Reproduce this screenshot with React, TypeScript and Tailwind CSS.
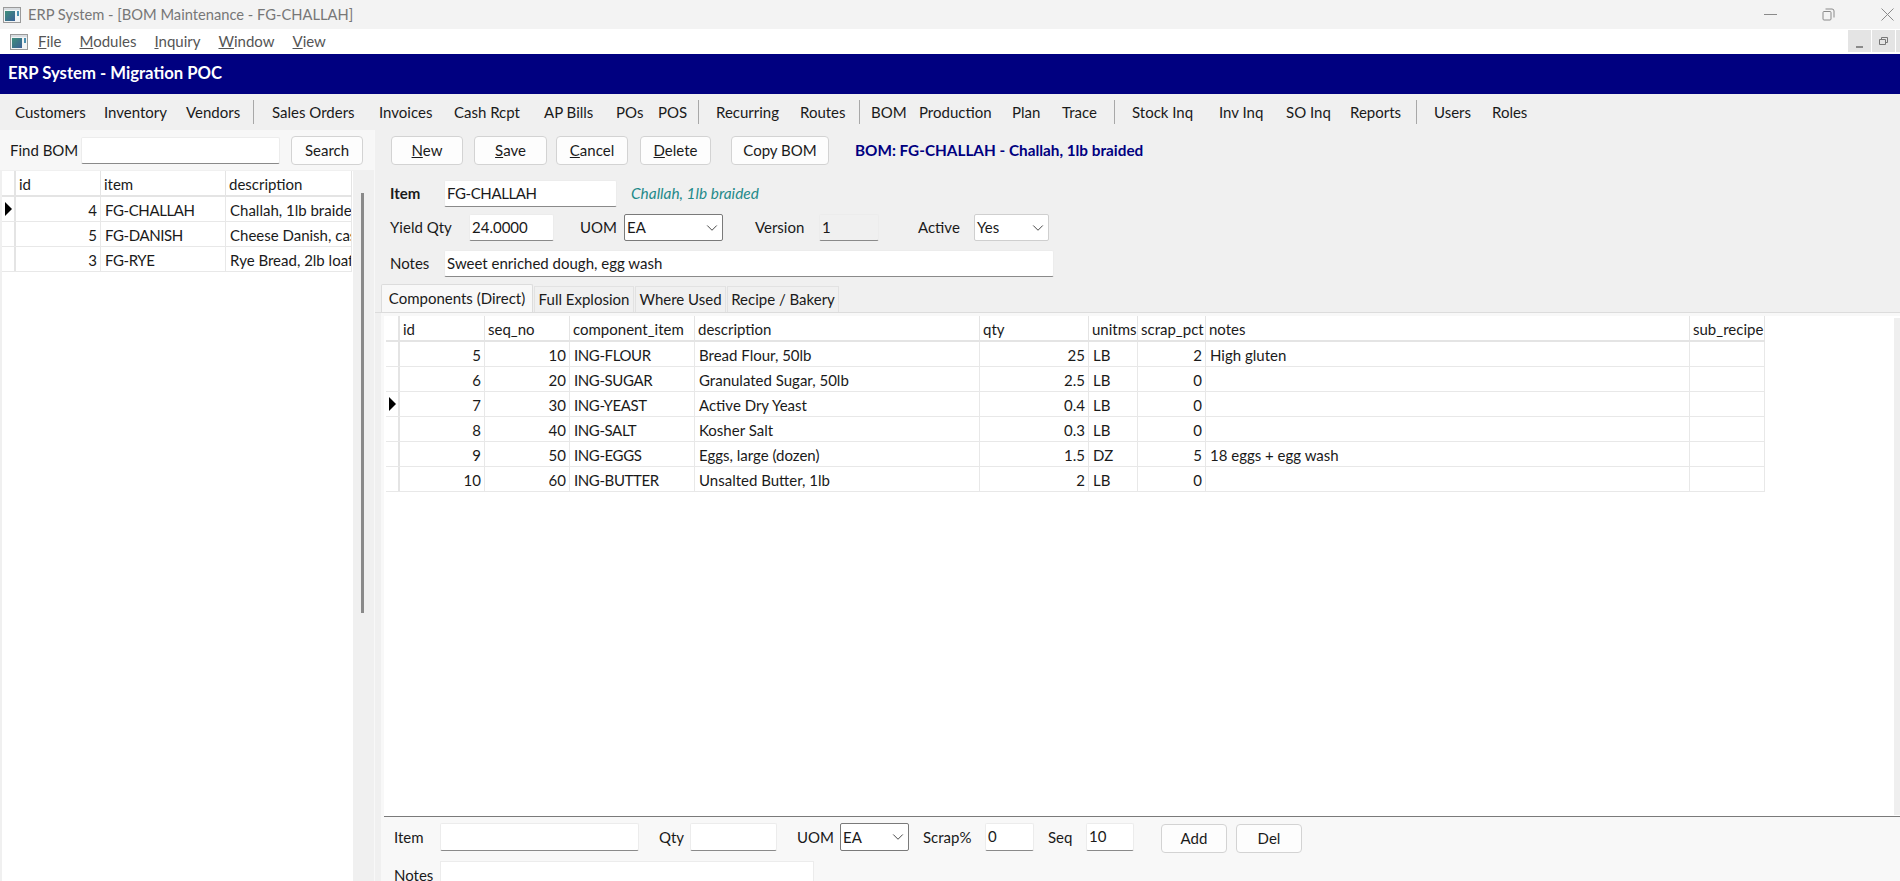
import { ChevronDown } from "lucide-react";

const topBtn =
  "h-[29px] rounded-[4px] border border-[#d3d3d3] bg-[#fdfdfd] text-center leading-[27px]";
const fieldBase =
  "h-[27px] rounded-[2px] border-x border-t border-b border-x-[#ececec] border-t-[#ececec] border-b-[#8a8a8a] pl-[2px] leading-[24px]";
const field = `${fieldBase} bg-white`;

const mainRows = [
  ["5", "10", "ING-FLOUR", "Bread Flour, 50lb", "25", "LB", "2", "High gluten", ""],
  ["6", "20", "ING-SUGAR", "Granulated Sugar, 50lb", "2.5", "LB", "0", "", ""],
  ["7", "30", "ING-YEAST", "Active Dry Yeast", "0.4", "LB", "0", "", ""],
  ["8", "40", "ING-SALT", "Kosher Salt", "0.3", "LB", "0", "", ""],
  ["9", "50", "ING-EGGS", "Eggs, large (dozen)", "1.5", "DZ", "5", "18 eggs + egg wash", ""],
  ["10", "60", "ING-BUTTER", "Unsalted Butter, 1lb", "2", "LB", "0", "", ""],
];

type Col = { name: string; w: string; right?: boolean; tight?: boolean };

const mainCols: Col[] = [
  { name: "id", w: "w-[85px]", right: true },
  { name: "seq_no", w: "w-[85px]", right: true },
  { name: "component_item", w: "w-[125px]", tight: true },
  { name: "description", w: "w-[285px]" },
  { name: "qty", w: "w-[109px]", right: true },
  { name: "unitms", w: "w-[49px]" },
  { name: "scrap_pct", w: "w-[68px]", right: true },
  { name: "notes", w: "w-[484px]" },
  { name: "sub_recipe", w: "w-[75px]" },
];

const leftRows = [
  ["4", "FG-CHALLAH", "Challah, 1lb braided"],
  ["5", "FG-DANISH", "Cheese Danish, case"],
  ["3", "FG-RYE", "Rye Bread, 2lb loaf"],
];

const leftCols: Col[] = [
  { name: "id", w: "w-[85px]", right: true },
  { name: "item", w: "w-[125px]", tight: true },
  { name: "description", w: "w-[126px]" },
];

function Marker() {
  return <span className="h-0 w-0 border-y-[7px] border-l-[7px] border-y-transparent border-l-black" />;
}

function Grid({ cols, rows, current }: { cols: Col[]; rows: string[][]; current: number }) {
  return (
    <div className="w-max">
      <div className="flex h-[26px] border-b-2 border-b-[#e4e4e4]">
        <div className="w-[14px] border-r-2 border-r-[#e4e4e4]" />
        {cols.map((c) => (
          <div key={c.name} className={`${c.w} overflow-hidden whitespace-nowrap border-r border-r-[#e4e4e4] pl-[3px] leading-[27px]`}>
            {c.name}
          </div>
        ))}
      </div>
      {rows.map((r, i) => (
        <div key={i} className="flex h-[25px] border-b border-b-[#e8e8e8]">
          <div className="flex w-[14px] items-center justify-center border-r-2 border-r-[#e4e4e4]">
            {i === current && <Marker />}
          </div>
          {r.map((v, j) => (
            <div
              key={j}
              className={`${cols[j].w} overflow-hidden whitespace-nowrap border-r border-r-[#e8e8e8] leading-[26px] ${cols[j].right ? "pr-[3px] text-right" : "pl-[4px]"} ${cols[j].tight ? "tracking-[-0.4px]" : ""}`}
            >
              {v}
            </div>
          ))}
        </div>
      ))}
    </div>
  );
}

function AppIcon() {
  return (
    <svg width="18" height="16" viewBox="0 0 18 16">
      <defs>
        <linearGradient id="appIconFill" x1="0" y1="0" x2="1" y2="1">
          <stop offset="0" stopColor="#3f8f7a" />
          <stop offset="1" stopColor="#3b5f96" />
        </linearGradient>
      </defs>
      <rect x="0.5" y="0.5" width="17" height="15" fill="#f2f4f5" stroke="#9a9a9a" />
      <rect x="1" y="1" width="16" height="2" fill="#d8dce0" />
      <rect x="2" y="4" width="10" height="10" fill="url(#appIconFill)" />
      <rect x="14" y="4" width="2" height="5" fill="#4a8fb0" />
    </svg>
  );
}

function Combo({ value, w, dark }: { value: string; w: string; dark?: boolean }) {
  return (
    <div className={`${w} flex h-[27px] items-center justify-between rounded-[2px] border bg-white pl-[2px] pr-[1px] ${dark ? "border-[#7a7a7a]" : "border-[#cfcfcf]"}`}>
      <span>{value}</span>
      <ChevronDown size={18} strokeWidth={1.3} className="text-[#444]" />
    </div>
  );
}

function Sep({ ml }: { ml: string }) {
  return <span className={`${ml} h-[24px] w-px bg-[#a8a8a8]`} />;
}

function ToolItem({ label, w }: { label: string; w: string }) {
  return <span className={`${w} whitespace-nowrap text-center`}>{label}</span>;
}

export default function App() {
  return (
    <div className="flex h-[881px] w-[1900px] flex-col overflow-hidden bg-[#f0f0f0] font-['Lato','Noto_Sans',sans-serif] text-[15px] text-[#1a1a1a]">
      {/* window title */}
      <div className="flex h-[29px] items-center bg-[#f3f3f3] pl-[3px]">
        <AppIcon />
        <span className="ml-[7px] text-[14.7px] text-[#777]">ERP System - [BOM Maintenance - FG-CHALLAH]</span>
        <div className="ml-auto flex items-center text-[#8a8a8a]">
          <svg width="13" height="13" viewBox="0 0 13 13" className="mr-[45px]">
            <path d="M0 6.5h13" stroke="currentColor" />
          </svg>
          <svg width="13" height="13" viewBox="0 0 13 13" className="mr-[46px]">
            <path d="M1 4.5a1 1 0 0 1 1-1h6a1 1 0 0 1 1 1v6.500a1 1 0 0 1-1 1H2a1 1 0 0 1-1-1z M3.500 1h6.500a2 2 0 0 1 2 2v6.500" fill="none" stroke="currentColor" />
          </svg>
          <svg width="13" height="13" viewBox="0 0 13 13" className="mr-[6px]">
            <path d="M0.500 0.500l12 12M12.500 0.500l-12 12" stroke="currentColor" />
          </svg>
        </div>
      </div>

      {/* menu bar */}
      <div className="flex h-[25px] items-center bg-white pl-[10px] text-[#555]">
        <AppIcon />
        <div className="ml-[10px] flex gap-[18px]">
          <span><u>F</u>ile</span>
          <span><u>M</u>odules</span>
          <span><u>I</u>nquiry</span>
          <span><u>W</u>indow</span>
          <span><u>V</u>iew</span>
        </div>
        <div className="ml-auto flex h-[23px] gap-px self-start">
          <div className="mt-px flex h-[22px] w-[23px] items-end justify-center bg-[#e4e4e4] pb-[4px]">
            <span className="h-[2px] w-[7px] bg-[#8a8a8a]" />
          </div>
          <div className="mt-px flex h-[22px] w-[23px] items-center justify-center bg-[#e4e4e4]">
            <svg width="9" height="8" viewBox="0 0 9 8">
              <path d="M0.500 2.500h6v5h-6zM2.500 2.500v-2h6v5h-2" fill="none" stroke="#777" />
            </svg>
          </div>
          <div className="mt-px h-[22px] w-[4px] bg-[#e4e4e4]" />
        </div>
      </div>

      {/* banner */}
      <div className="flex h-[40px] items-center bg-[#000080] pl-[8px] text-[16.700px] font-bold text-white">
        ERP System - Migration POC
      </div>

      {/* toolbar */}
      <div className="flex h-[36px] items-center pl-[15px]">
        <ToolItem label="Customers" w="w-[69px]" />
        <ToolItem label="Inventory" w="w-[61px] ml-[20px]" />
        <ToolItem label="Vendors" w="w-[53px] ml-[21px]" />
        <Sep ml="ml-[14px]" />
        <ToolItem label="Sales Orders" w="w-[82px] ml-[18px]" />
        <ToolItem label="Invoices" w="w-[53px] ml-[25px]" />
        <ToolItem label="Cash Rcpt" w="w-[65px] ml-[22px]" />
        <ToolItem label="AP Bills" w="w-[49px] ml-[25px]" />
        <ToolItem label="POs" w="w-[25px] ml-[23px]" />
        <ToolItem label="POS" w="w-[27px] ml-[17px]" />
        <Sep ml="ml-[13px]" />
        <ToolItem label="Recurring" w="w-[62px] ml-[17px]" />
        <ToolItem label="Routes" w="w-[45px] ml-[22px]" />
        <Sep ml="ml-[14px]" />
        <ToolItem label="BOM" w="w-[32px] ml-[11px]" />
        <ToolItem label="Production" w="w-[72px] ml-[16px]" />
        <ToolItem label="Plan" w="w-[28px] ml-[21px]" />
        <ToolItem label="Trace" w="w-[35px] ml-[22px]" />
        <Sep ml="ml-[17px]" />
        <ToolItem label="Stock Inq" w="w-[60px] ml-[17px]" />
        <ToolItem label="Inv Inq" w="w-[44px] ml-[27px]" />
        <ToolItem label="SO Inq" w="w-[44px] ml-[23px]" />
        <ToolItem label="Reports" w="w-[51px] ml-[20px]" />
        <Sep ml="ml-[15px]" />
        <ToolItem label="Users" w="w-[35px] ml-[17px]" />
        <ToolItem label="Roles" w="w-[35px] ml-[23px]" />
      </div>

      <div className="flex min-h-0 flex-1">
        {/* left panel */}
        <div className="flex w-[375px] flex-none flex-col border-r border-r-[#f8f8f8]">
          <div className="flex h-[40px] flex-none items-center bg-[#f7f7f7] pl-[10px]">
            <span className="w-[71px]">Find BOM</span>
            <div className={`${field} w-[199px]`} />
            <div className={`${topBtn} ml-[11px] h-[28px] w-[72px]`}>Search</div>
          </div>
          <div className="flex min-h-0 flex-1 pl-[2px] pt-[1px]">
            <div className="w-[351px] overflow-hidden bg-white">
              <Grid cols={leftCols} rows={leftRows} current={0} />
            </div>
            <div className="w-[21px] pl-[8px] pt-[22px]">
              <div className="h-[420px] w-[3px] bg-[#8a8a8a]" />
            </div>
          </div>
        </div>

        {/* right panel */}
        <div className="flex min-w-0 flex-1 flex-col">
          <div className="flex h-[50px] flex-none items-start pl-[16px] pt-[6px]">
            <div className={`${topBtn} w-[72px]`}><u>N</u>ew</div>
            <div className={`${topBtn} ml-[11px] w-[73px]`}><u>S</u>ave</div>
            <div className={`${topBtn} ml-[9px] w-[72px]`}><u>C</u>ancel</div>
            <div className={`${topBtn} ml-[12px] w-[71px]`}><u>D</u>elete</div>
            <div className={`${topBtn} ml-[20px] w-[98px]`}>Copy BOM</div>
            <span className="ml-[26px] text-[15.300px] font-bold leading-[29px] text-[#000080]">BOM: FG-CHALLAH - Challah, 1lb braided</span>
          </div>

          <div className="flex h-[27px] flex-none items-center pl-[15px]">
            <span className="w-[54px] font-bold">Item</span>
            <div className={`${field} w-[173px] tracking-[-0.4px]`}>FG-CHALLAH</div>
            <span className="ml-[14px] text-[15.400px] italic text-[#1f8a8a]">Challah, 1lb braided</span>
          </div>
          <div className="mt-[7px] flex h-[27px] flex-none items-center pl-[15px]">
            <span className="w-[79px]">Yield Qty</span>
            <div className={`${field} w-[85px]`}>24.0000</div>
            <span className="ml-[26px] w-[44px]">UOM</span>
            <Combo value="EA" w="w-[99px]" dark />
            <span className="ml-[32px] w-[64px]">Version</span>
            <div className={`${fieldBase} w-[60px] bg-[#f0f0f0]`}>1</div>
            <span className="ml-[39px] w-[56px]">Active</span>
            <Combo value="Yes" w="w-[75px]" />
          </div>
          <div className="mt-[9px] flex h-[27px] flex-none items-center pl-[15px]">
            <span className="w-[54px]">Notes</span>
            <div className={`${field} w-[610px]`}>Sweet enriched dough, egg wash</div>
          </div>

          {/* tabs */}
          <div className="mt-[8px] flex h-[28px] flex-none items-end border-b border-b-[#dcdcdc] pl-[6px]">
            <div className="h-[28px] w-[152px] rounded-t-[2px] border border-b-0 border-[#dcdcdc] bg-[#f8f8f8] text-center leading-[26px]">Components (Direct)</div>
            <div className="ml-px h-[26px] w-[100px] border border-b-0 border-[#e2e2e2] text-center leading-[25px]">Full Explosion</div>
            <div className="ml-px h-[26px] w-[91px] border border-b-0 border-[#e2e2e2] text-center leading-[25px]">Where Used</div>
            <div className="ml-px h-[26px] w-[112px] border border-b-0 border-[#e2e2e2] text-center leading-[25px]">Recipe / Bakery</div>
          </div>

          {/* component grid */}
          <div className="flex min-h-0 flex-1 flex-col pl-[6px]">
            <div className="flex min-h-0 flex-1 flex-col border-l-[3px] border-t-[3px] border-[#f8f8f8]">
              <div className="flex flex-1 border-b border-b-[#7a7a7a] bg-white">
                <div className="flex-1 pl-[2px]">
                  <Grid cols={mainCols} rows={mainRows} current={2} />
                </div>
                <div className="mb-px mt-[2px] w-[6px] bg-[#efefef]" />
              </div>

              {/* entry area */}
              <div className="h-[64px] flex-none bg-[#f8f8f8]">
                <div className="mt-[6px] flex h-[28px] items-center pl-[10px]">
                  <span className="w-[46px]">Item</span>
                  <div className={`${field} h-[28px] w-[199px]`} />
                  <span className="ml-[20px] w-[31px]">Qty</span>
                  <div className={`${field} h-[28px] w-[87px]`} />
                  <span className="ml-[20px] w-[43px]">UOM</span>
                  <Combo value="EA" w="w-[69px] !h-[28px]" dark />
                  <span className="ml-[14px] w-[62px]">Scrap%</span>
                  <div className={`${field} h-[28px] w-[49px]`}>0</div>
                  <span className="ml-[14px] w-[38px]">Seq</span>
                  <div className={`${field} h-[28px] w-[48px]`}>10</div>
                  <div className={`${topBtn} ml-[27px] mt-[2px] w-[66px]`}>Add</div>
                  <div className={`${topBtn} ml-[9px] mt-[2px] w-[66px]`}>Del</div>
                </div>
                <div className="mt-[10px] flex h-[24px] items-start pl-[10px]">
                  <span className="w-[46px] leading-[28px]">Notes</span>
                  <div className="h-[24px] w-[374px] border border-b-0 border-[#ececec] bg-white" />
                </div>
              </div>
            </div>
          </div>
        </div>
      </div>
    </div>
  );
}
